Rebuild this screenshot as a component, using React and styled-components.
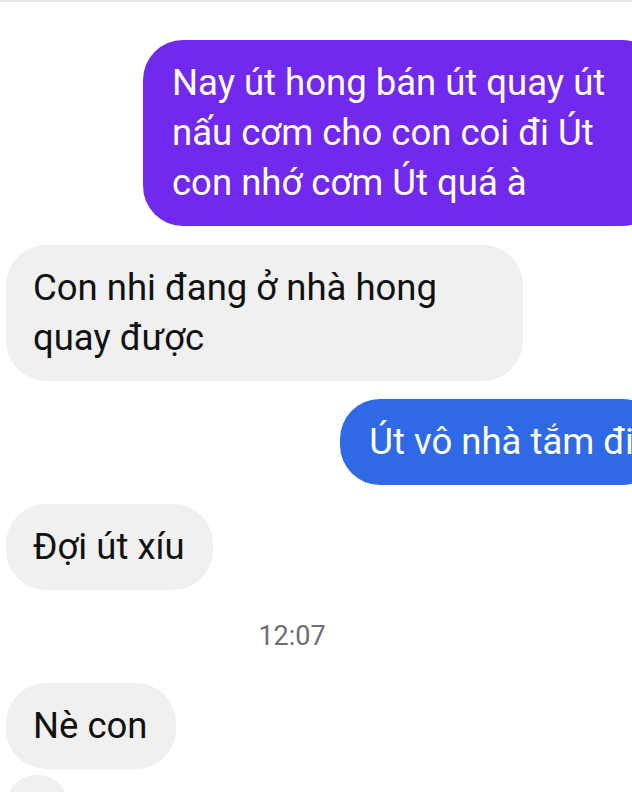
import React from 'react';
import styled, { createGlobalStyle } from "styled-components";

const Global = createGlobalStyle`
html, body {
    margin: 0;
    padding: 0;
    background: #ffffff;
}
body {
    font-family: Roboto, "Noto Sans", "Liberation Sans", sans-serif;
    overflow: hidden;
}
`;

const Screen = styled.div`
width: 632px;
height: 792px;
overflow: hidden;
border-top: 2px solid #e4e4e4;
box-sizing: border-box;
`;

const Thread = styled.div`
width: 662px;
display: flex;
flex-direction: column;
padding: 0 0 0 6px;
box-sizing: border-box;
`;

const Row = styled.div`
display: flex;
justify-content: ${p => (p.$mine ? "flex-end" : "flex-start")};
margin-top: ${p => p.$gap}px;
`;

const Bubble = styled.div`
background: ${p => p.$bg};
color: ${p => p.$fg};
border-radius: 40px;
width: ${p => (p.$width ? `${p.$width}px` : "auto")};
box-sizing: border-box;
padding: 18px 28px 18px ${p => (p.$mine ? 29 : 27)}px;
font-size: 36.5px;
line-height: 50px;
`;

const Text = styled.div`
max-width: ${p => (p.$max ? `${p.$max}px` : "none")};
white-space: ${p => (p.$nowrap ? "nowrap" : "normal")};
`;

const Time = styled.div`
width: 572px;
text-align: center;
color: #6e6e73;
font-size: 27px;
line-height: 30px;
margin-top: ${p => p.$top}px;
`;

const Stub = styled.div`
width: 62px;
height: 40px;
background: #f0f0f0;
border-radius: 30px 30px 0 0;
margin-top: 6px;
`;

const purple = "#7229ee";
const blue = "#2f69e6";
const grey = "#f0f0f0";

const App = () => {
    return (
        <Screen>
            <Global />
            <Thread>
                <Time $top={-24}>10:47</Time>
                <Row $mine $gap={32}>
                    <Bubble $mine $width={519} $bg={purple} $fg="#ffffff">
                        <Text $max={445}>Nay út hong bán út quay út nấu cơm cho con coi đi Út con nhớ cơm Út quá à</Text>
                    </Bubble>
                </Row>
                <Row $gap={19}>
                    <Bubble $bg={grey} $fg="#111111">
                        <Text $max={462}>Con nhi đang ở nhà hong quay được</Text>
                    </Bubble>
                </Row>
                <Row $mine $gap={18}>
                    <Bubble $mine $bg={blue} $fg="#ffffff">
                        <Text $nowrap>Út vô nhà tắm đi</Text>
                    </Bubble>
                </Row>
                <Row $gap={19}>
                    <Bubble $bg={grey} $fg="#111111">
                        <Text $nowrap>Đợi út xíu</Text>
                    </Bubble>
                </Row>
                <Time $top={31}>12:07</Time>
                <Row $gap={32}>
                    <Bubble $bg={grey} $fg="#111111">
                        <Text $nowrap>Nè con</Text>
                    </Bubble>
                </Row>
                <Stub />
            </Thread>
        </Screen>
    );
};

export default App;
